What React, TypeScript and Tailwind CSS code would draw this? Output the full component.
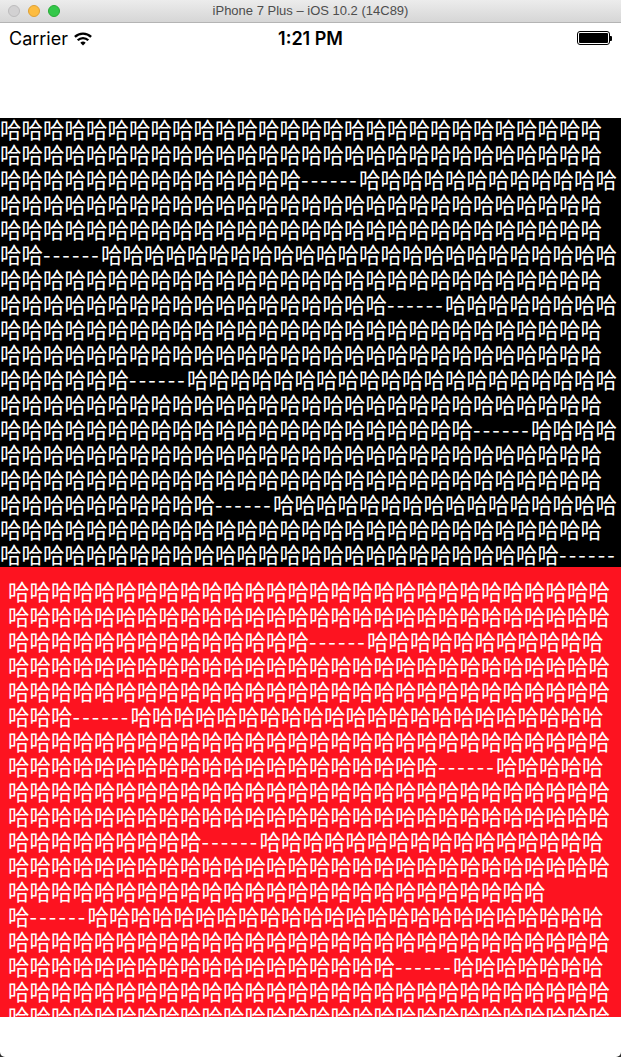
import { FunctionComponent } from "react";

const HA = "哈".repeat(69);
const DASH = "------";

const Paragraph: FunctionComponent<{ reps: number }> = ({ reps }) => {
  return (
    <>
      {Array.from({ length: reps }).map((_, i) => (
        <span key={i}>
          {HA}
          <span className="whitespace-nowrap">
            哈<span className="tracking-[2.2px]">{DASH}</span>
          </span>
        </span>
      ))}
    </>
  );
};

const Wifi = () => (
  <svg width="20" height="15" viewBox="0 0 20 15" className="block">
    <path d="M1.9 5.9 A11.5 11.5 0 0 1 18.1 5.9" fill="none" stroke="#000" strokeWidth="2.3" />
    <path d="M4.7 9.3 A7.5 7.5 0 0 1 15.3 9.3" fill="none" stroke="#000" strokeWidth="2.3" />
    <path d="M10 14.5 L7.3 11.8 A3.8 3.8 0 0 1 12.7 11.8 Z" fill="#000" />
  </svg>
);

const Battery = () => (
  <div className="flex items-center">
    <div className="w-[33px] h-[14px] rounded-[3px] border border-black p-[1px]">
      <div className="w-full h-full bg-black rounded-[1px]" />
    </div>
    <div className="w-[2px] h-[5px] bg-black rounded-r-[1px]" />
  </div>
);

const App: FunctionComponent = () => {
  return (
    <div className="w-[621px] h-[1057px] bg-[#2b2b2b]">
      <div className="w-full h-full bg-white rounded-b-[5px] overflow-hidden flex flex-col">
        {/* window title */}
        <div className="h-[23px] shrink-0 relative flex items-center justify-center bg-gradient-to-b from-[#ececec] to-[#d6d6d6] border-b border-[#b4b4b4]">
          <div className="absolute left-[8px] top-[5px] flex gap-[8px]">
            <span className="w-[12px] h-[12px] rounded-full bg-[#d2d1d2] border border-[#bdbcbd]" />
            <span className="w-[12px] h-[12px] rounded-full bg-[#fdbc40] border border-[#dea034]" />
            <span className="w-[12px] h-[12px] rounded-full bg-[#34c84a] border border-[#27aa35]" />
          </div>
          <span className="text-[13px] text-[#4d4d4d] font-['Liberation_Sans',sans-serif]">
            iPhone 7 Plus – iOS 10.2 (14C89)
          </span>
        </div>

        {/* status bar */}
        <div className="h-[30px] shrink-0 flex items-center justify-between px-[9px] text-black font-['Inter',sans-serif] text-[18px]">
          <div className="flex items-center gap-[5px] w-[120px]">
            <span>Carrier</span>
            <Wifi />
          </div>
          <span className="font-semibold">1:21 PM</span>
          <div className="w-[120px] flex justify-end">
            <Battery />
          </div>
        </div>

        <div className="h-[65px] shrink-0" />

        {/* label */}
        <div className="h-[449px] shrink-0 bg-black text-white overflow-hidden font-['Noto_Sans_CJK_SC',sans-serif] text-[21.5px] leading-[25px]">
          <p className="-mt-[2px]">
            <Paragraph reps={8} />
          </p>
        </div>

        {/* text view */}
        <div className="h-[450px] shrink-0 bg-[#fd1320] text-white overflow-hidden px-[8px] pt-[11px] font-['Noto_Sans_CJK_SC',sans-serif] text-[21.5px] leading-[25px]">
          <p>
            <Paragraph reps={8} />
          </p>
        </div>
      </div>
    </div>
  );
};

export default App;
